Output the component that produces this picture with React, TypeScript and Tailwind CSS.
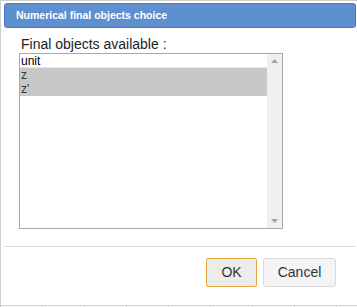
import React from "react";

export default function App() {
  return (
    <div
      className="relative w-[357px] h-[307px] overflow-hidden bg-white border-l border-t border-[#d0d0d0]"
      style={{ fontFamily: '"Liberation Sans", Arial, sans-serif' }}
    >
      <div className="flex flex-col w-[352px] ml-[3px] mt-[2px]">
        {/* Title bar */}
        <div className="h-[25px] flex items-center px-[11px] bg-[#5f8fcf] border border-[#3f7bd6] rounded-[3px] text-white font-bold text-[10.5px]">
          Numerical final objects choice
        </div>
        {/* Body */}
        <div className="flex flex-col pl-[15px] pt-[7px]">
          <div className="text-[14px] leading-[18px] text-[#222] pl-[2px]">Final objects available :</div>
          <div className="w-[264px] h-[176px] border border-[#a9a9a9] flex bg-white">
            <div className="flex-1 flex flex-col text-[12px] leading-[14px] text-black">
              <div className="h-[14px] pl-[1px] border-b border-[#e6e6e6]">unit</div>
              <div className="h-[14px] pl-[1px] bg-[#c8c8c8] text-[#333]">z</div>
              <div className="h-[14px] pl-[1px] bg-[#c8c8c8] text-[#333]">z'</div>
            </div>
            <div className="w-[15px] bg-[#f0f0f0] flex flex-col justify-between items-center py-[5px]">
              <svg width="7" height="4" viewBox="0 0 7 4">
                <path d="M0 4 L3.5 0 L7 4 Z" fill="#a3a3a3" />
              </svg>
              <svg width="7" height="4" viewBox="0 0 7 4">
                <path d="M0 0 L3.5 4 L7 0 Z" fill="#a3a3a3" />
              </svg>
            </div>
          </div>
        </div>
        {/* Separator */}
        <div className="mt-[17px] h-[1px] bg-[#dcdcdc] w-[352px]" />
        {/* Buttons */}
        <div className="flex justify-end gap-[6px] pr-[20px] pt-[11px]">
          <button className="w-[51px] h-[29px] border border-[#e8a73a] bg-[#ececec] rounded-[2px] text-[14px] text-[#333]">
            OK
          </button>
          <button className="w-[73px] h-[29px] border border-[#dadada] bg-[#f4f4f4] rounded-[3px] text-[14px] text-[#333]">
            Cancel
          </button>
        </div>
      </div>
      {/* background grid peeking at bottom */}
      <div className="absolute left-0 right-0 top-[304px] h-[3px] border-t border-[#d4d4d4] bg-[#f7f7f7] flex">
        <div className="w-[42px] border-r border-[#dcdcdc]" />
        <div className="w-[42px] border-r border-[#dcdcdc]" />
        <div className="w-[42px] border-r border-[#dcdcdc]" />
        <div className="w-[42px] border-r border-[#dcdcdc]" />
        <div className="w-[42px] border-r border-[#dcdcdc]" />
        <div className="w-[42px] border-r border-[#dcdcdc]" />
        <div className="w-[42px] border-r border-[#dcdcdc]" />
        <div className="w-[42px] border-r border-[#dcdcdc]" />
      </div>
    </div>
  );
}
